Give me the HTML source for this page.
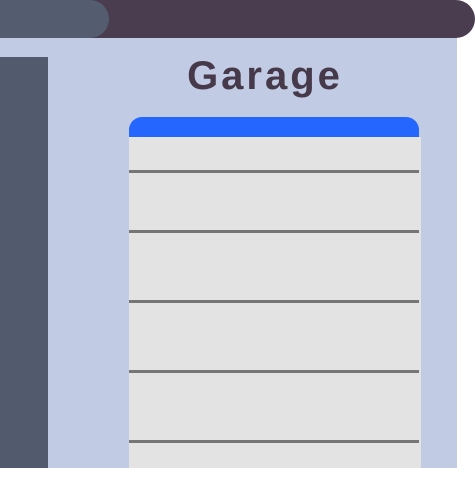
<!DOCTYPE html>
<html><head><style>
html,body{margin:0;padding:0;width:475px;height:500px;background:#fff;overflow:hidden;position:relative}
div{position:absolute}
.ln{left:129px;width:290px;height:3px;background:#767676}
</style></head><body>
<div style="left:0;top:38px;width:457px;height:430px;background:#c1cbe3"></div>
<div style="left:0;top:0;width:475px;height:38px;background:#4a3d4f;border-radius:0 19px 19px 0"></div>
<div style="left:0;top:0;width:109px;height:38px;background:#545d70;border-radius:0 19px 19px 0"></div>
<div style="left:0;top:57px;width:48px;height:411px;background:#525a6d"></div>
<div style="left:129px;top:117px;width:290px;height:22px;background:#2566fe;border-radius:13px 13px 0 0"></div>
<div style="left:129px;top:137px;width:292px;height:331px;background:#e3e3e3"></div>
<div class="ln" style="top:170px"></div>
<div class="ln" style="top:230px"></div>
<div class="ln" style="top:300px"></div>
<div class="ln" style="top:370px"></div>
<div class="ln" style="top:440px"></div>
<div style="left:140px;top:53px;width:250px;text-align:center;font:bold 40px 'Liberation Sans',sans-serif;letter-spacing:3px;color:#45394a;line-height:46px">Garage</div>
</body></html>
